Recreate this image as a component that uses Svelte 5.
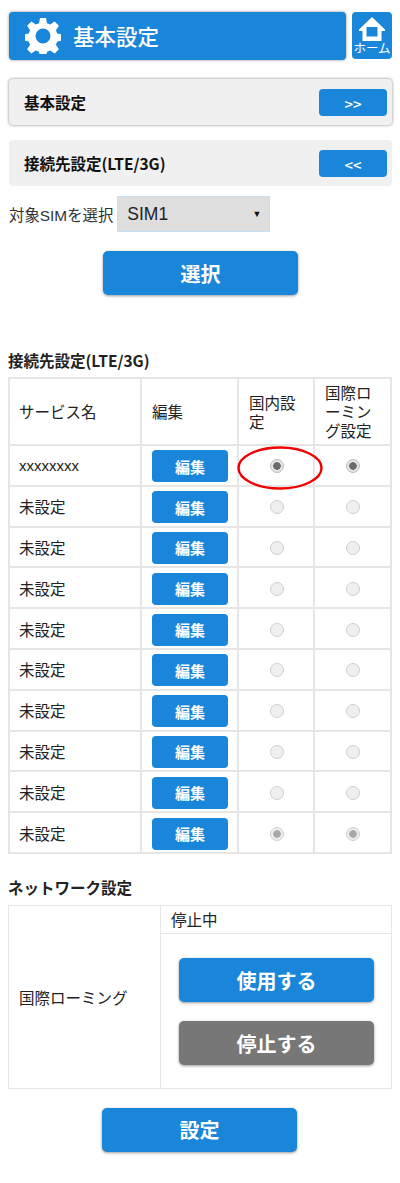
<script>
  const rows = ['xxxxxxxx', '未設定', '未設定', '未設定', '未設定', '未設定', '未設定', '未設定', '未設定', '未設定'];
  const state = (i) => (i === 0 ? 'on' : i === 9 ? 'dim' : 'off');
</script>

<main class="page">
  <header class="top">
    <h1 class="title">
      <svg class="gear" viewBox="0 0 36 36" width="36" height="36" aria-hidden="true">
        <path fill="#fff" fill-rule="evenodd" d="M15 0h6l1 5.200 3.300 1.400 4.400-3 4.200 4.200-3 4.400 1.400 3.300 5.200 1v6l-5.200 1-1.400 3.300 3 4.400-4.200 4.200-4.400-3-3.300 1.400-1 5.200h-6l-1-5.200-3.300-1.400-4.400 3-4.200-4.200 3-4.400-1.400-3.300-5.200-1v-6l5.200-1 1.400-3.300-3-4.400 4.200-4.200 4.400 3 3.300-1.400zM18 10.500a7.500 7.500 0 1 0 0 15 7.500 7.500 0 0 0 0-15z"/>
      </svg>
      <span>基本設定</span>
    </h1>
    <div class="home">
      <svg viewBox="0 0 26 24" width="26" height="24" aria-hidden="true">
        <path fill="#fff" fill-rule="evenodd" d="M13 0 26 12.500v1.500h-3.500v10h-19v-10H0v-1.500zM7.500 10v9.500h11V10z"/>
      </svg>
      <span>ホーム</span>
    </div>
  </header>

  <section class="menu raised">
    <strong>基本設定</strong>
    <button class="mini">&gt;&gt;</button>
  </section>
  <section class="menu second">
    <strong>接続先設定(LTE/3G)</strong>
    <button class="mini">&lt;&lt;</button>
  </section>

  <div class="sim">
    <span>対象SIMを選択</span>
    <div class="select">SIM1<i>▼</i></div>
  </div>

  <button class="big first">選択</button>

  <h2 class="h-connect">接続先設定(LTE/3G)</h2>
  <table class="list">
    <colgroup><col class="c1" /><col class="c2" /><col class="c3" /><col class="c4" /></colgroup>
    <thead>
      <tr>
        <th>サービス名</th>
        <th>編集</th>
        <th>国内設定</th>
        <th>国際ローミング設定</th>
      </tr>
    </thead>
    <tbody>
      {#each rows as name, i}
        <tr>
          <td class:latin={i === 0}>{name}</td>
          <td><button class="edit">編集</button></td>
          <td class="radio-cell">
            <span class="radio {state(i)}"></span>
            {#if i === 0}
              <svg class="ring" viewBox="0 0 86 44" width="86" height="44" aria-hidden="true">
                <ellipse cx="43" cy="22" rx="41.500" ry="20.500" fill="none" stroke="#f00000" stroke-width="2.400" />
              </svg>
            {/if}
          </td>
          <td class="radio-cell"><span class="radio {state(i)}"></span></td>
        </tr>
      {/each}
    </tbody>
  </table>

  <h2 class="h-network">ネットワーク設定</h2>
  <table class="net">
    <colgroup><col class="n1" /><col /></colgroup>
    <tbody>
      <tr>
        <td rowspan="2">国際ローミング</td>
        <td class="status">停止中</td>
      </tr>
      <tr>
        <td class="actions">
          <button class="big wide">使用する</button>
          <button class="big wide gray">停止する</button>
        </td>
      </tr>
    </tbody>
  </table>

  <button class="big last">設定</button>
</main>

<style>
  :global(body) {
    margin: 0;
    background: #fff;
  }
  .page {
    width: 400px;
    height: 1183px;
    overflow: hidden;
    box-sizing: border-box;
    padding-top: 12px;
    font-family: "Noto Sans CJK JP", "Noto Sans", sans-serif;
    color: #222;
  }
  button {
    border: 0;
    color: #fff;
    background: #1a86d9;
    font-family: inherit;
    padding: 0;
    display: block;
  }
  .top {
    display: flex;
    gap: 6px;
    padding-left: 9px;
  }
  .title {
    width: 337px;
    height: 48px;
    margin: 0;
    box-sizing: border-box;
    padding-left: 16px;
    display: flex;
    align-items: center;
    gap: 12px;
    background: #1a86d9;
    border-radius: 4px;
    box-shadow: 0 0 3px rgba(0, 0, 0, 0.45);
    color: #fff;
    font-size: 21.500px;
    font-weight: 500;
  }
  .title span {
    margin-top: -2px;
  }
  .gear {
    flex: none;
  }
  .home {
    width: 40px;
    height: 47px;
    background: #1a86d9;
    border-radius: 4px;
    color: #fff;
    display: flex;
    flex-direction: column;
    align-items: center;
    padding-top: 5px;
    box-sizing: border-box;
  }
  .home span {
    font-size: 12.500px;
    line-height: 14px;
    white-space: nowrap;
  }
  .menu {
    width: 383px;
    margin-left: 9px;
    height: 46px;
    box-sizing: border-box;
    padding: 0 5px 0 15px;
    display: flex;
    align-items: center;
    justify-content: space-between;
    background: #f0f0f0;
    border-radius: 4px;
    font-size: 15.500px;
    color: #111;
  }
  .raised {
    margin-top: 19px;
    box-shadow: 0 0 3px rgba(0, 0, 0, 0.5);
  }
  .second {
    margin-top: 15px;
  }
  .mini {
    width: 68px;
    height: 27px;
    border-radius: 4px;
    font-size: 15px;
    font-weight: 500;
    padding-top: 2px;
  }
  .sim {
    display: flex;
    align-items: center;
    gap: 4px;
    margin: 10px 0 0 9px;
    font-size: 15.400px;
    font-family: "Liberation Sans", "Noto Sans CJK JP", sans-serif;
    color: #333;
  }
  .select {
    width: 153px;
    height: 36px;
    box-sizing: border-box;
    padding: 0 9px;
    display: flex;
    align-items: center;
    justify-content: space-between;
    background: #dedede;
    border: 1px solid #c3e0f7;
    font-size: 17.500px;
    color: #222;
  }
  .select i {
    font-style: normal;
    font-size: 9px;
    margin-right: -1px;
    color: #111;
  }
  .big {
    width: 195px;
    height: 44px;
    border-radius: 5px;
    font-size: 20px;
    font-weight: 700;
    box-shadow: 0 1px 3px rgba(0, 0, 0, 0.4);
  }
  .first {
    margin: 19px 0 0 103px;
  }
  h2 {
    margin: 0;
    font-size: 15.500px;
    font-weight: 700;
    color: #222;
    line-height: 20px;
    margin-left: 8px;
  }
  .h-connect {
    margin-top: 55px;
  }
  .h-network {
    margin-top: 23px;
  }
  table {
    border-collapse: collapse;
    table-layout: fixed;
    margin-left: 8px;
    font-size: 15.500px;
    color: #222;
  }
  td,
  th {
    border: 2px solid #e6e6e6;
    padding: 0 0 0 9px;
    text-align: left;
    font-weight: 400;
    box-sizing: border-box;
  }
  .list {
    width: 382px;
    margin-top: 7px;
  }
  .c1 {
    width: 132px;
  }
  .c2 {
    width: 97px;
  }
  .c3 {
    width: 76px;
  }
  .c4 {
    width: 77px;
  }
  .list th {
    height: 67px;
    line-height: 19px;
    word-break: break-all;
  }
  .list th:nth-child(2),
  .list th:nth-child(3),
  .list th:nth-child(4) {
    padding-left: 10px;
  }
  .list th:nth-child(3),
  .list th:nth-child(4) {
    padding-right: 9px;
  }
  .list tbody td {
    height: 40.800px;
  }
  .list tbody td.latin {
    font-family: "Liberation Sans", sans-serif;
    font-size: 15px;
  }
  .edit {
    width: 76px;
    height: 32px;
    margin-top: 2px;
    border-radius: 4px;
    font-size: 15px;
    font-weight: 700;
  }
  .list tbody td:nth-child(2) {
    padding-left: 10px;
  }
  .list tbody td.radio-cell {
    position: relative;
    padding: 2px 0 0;
    text-align: center;
  }
  .list tbody td.radio-cell:nth-child(3) {
    padding-left: 2px;
  }
  .radio {
    display: block;
    width: 14px;
    height: 14px;
    margin: 0 auto;
    box-sizing: border-box;
    border-radius: 50%;
    border: 1px solid #cfcfcf;
    background: #efefef;
  }
  .radio.on {
    background: radial-gradient(circle, #6a6a6a 0 3.500px, #e4e4e4 4px);
    border-color: #bdbdbd;
  }
  .radio.dim {
    background: radial-gradient(circle, #a8a8a8 0 3.500px, #ededed 4px);
  }
  .ring {
    position: absolute;
    left: -2px;
    top: 0;
    pointer-events: none;
    overflow: visible;
  }
  .net {
    width: 384px;
    margin-top: 8px;
  }
  .n1 {
    width: 152px;
  }
  .net td {
    border-width: 1px;
    padding-left: 10px;
  }
  .status {
    height: 28px;
  }
  .net td.actions {
    height: 155px;
    padding: 2px 18px 0;
  }
  .wide {
    margin: 0;
    width: 195px;
  }
  .wide + .wide {
    margin-top: 19px;
  }
  .gray {
    background: #777;
  }
  .last {
    margin: 19px 0 0 102px;
  }
</style>
